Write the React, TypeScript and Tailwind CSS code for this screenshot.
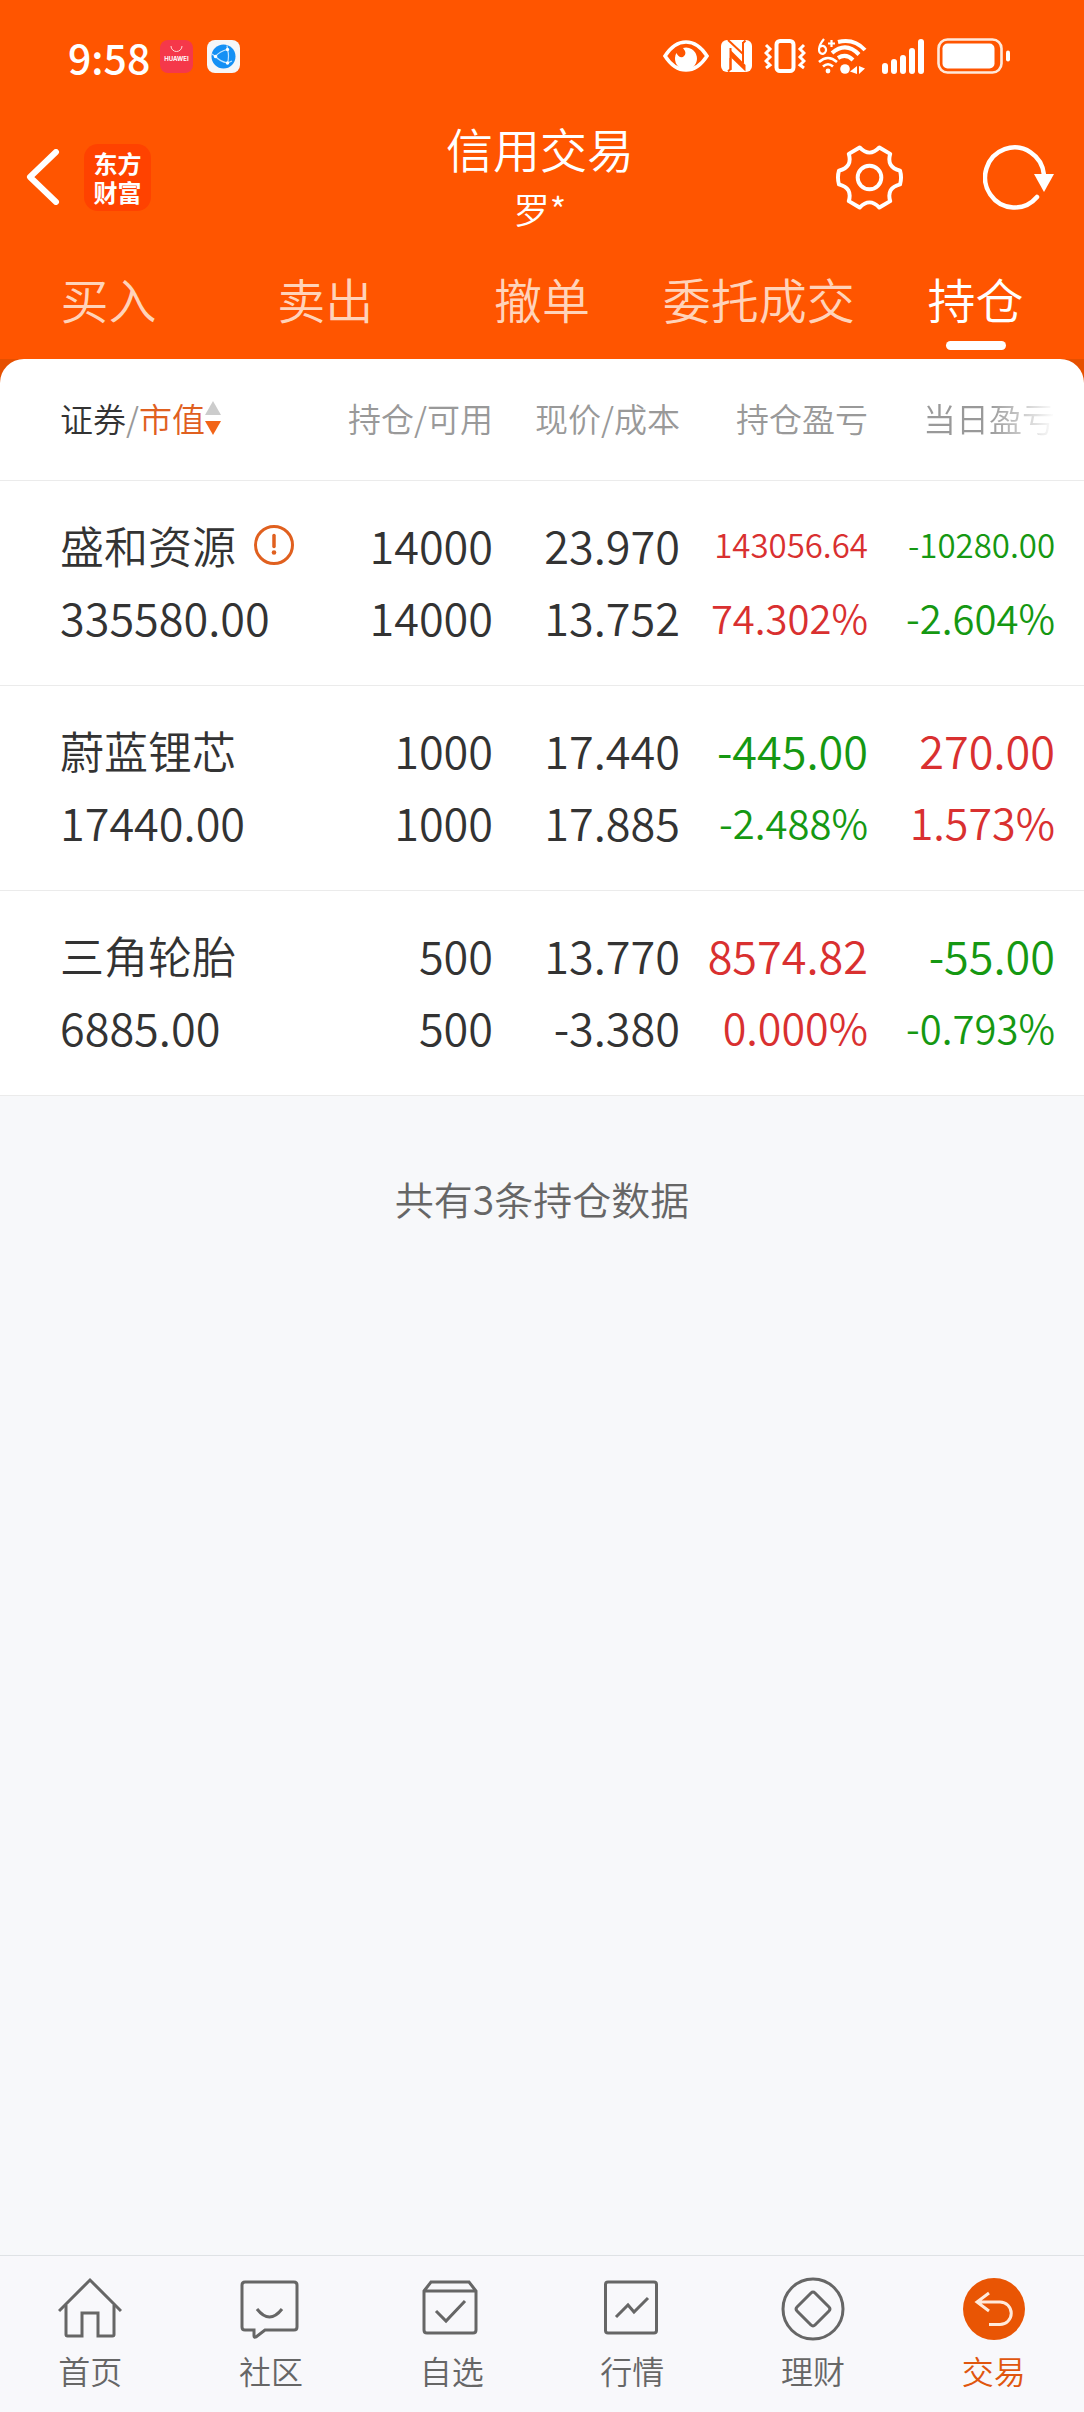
import { useState } from "react";
import type { ReactNode } from "react";

type Holding = {
  name: string;
  warning?: boolean;
  value: string;
  amount: string;
  available: string;
  price: string;
  cost: string;
  profit: string;
  profitRate: string;
  dayProfit: string;
  dayRate: string;
};

const tabs = ["买入", "卖出", "撤单", "委托成交", "持仓"];

const holdings: Holding[] = [
  {
    name: "盛和资源",
    warning: true,
    value: "335580.00",
    amount: "14000",
    available: "14000",
    price: "23.970",
    cost: "13.752",
    profit: "143056.64",
    profitRate: "74.302%",
    dayProfit: "-10280.00",
    dayRate: "-2.604%",
  },
  {
    name: "蔚蓝锂芯",
    value: "17440.00",
    amount: "1000",
    available: "1000",
    price: "17.440",
    cost: "17.885",
    profit: "-445.00",
    profitRate: "-2.488%",
    dayProfit: "270.00",
    dayRate: "1.573%",
  },
  {
    name: "三角轮胎",
    value: "6885.00",
    amount: "500",
    available: "500",
    price: "13.770",
    cost: "-3.380",
    profit: "8574.82",
    profitRate: "0.000%",
    dayProfit: "-55.00",
    dayRate: "-0.793%",
  },
];

// long values shrink so that they stay inside their column
function sizeFor(text: string) {
  if (text.length > 8) return "text-[33px]";
  if (text.endsWith("%") && text.length > 6) return "text-[40px]";
  if (text.endsWith("%")) return "text-[43px]";
  return "text-[45px]";
}

function StatusBar() {
  return (
    <div className="flex h-28 items-center justify-between pr-[74px] pl-[68px]">
      <div className="flex items-center">
        <span className="text-[41px] leading-[48px] font-medium">9:58</span>
        <svg className="ml-2.5 size-[33px]" viewBox="0 0 33 33" aria-hidden>
          <rect width="33" height="33" rx="8" fill="#f5384a" />
          <path d="M11 6a5.5 5.5 0 0 0 11 0" fill="none" stroke="#ffd9d6" strokeWidth="1" />
          <text x="16.5" y="21" textAnchor="middle" fontSize="6" fontWeight="700" fill="#fff" fontFamily="Inter, sans-serif">
            HUAWEI
          </text>
        </svg>
        <svg className="ml-3.5 size-[33px]" viewBox="0 0 33 33" aria-hidden>
          <rect width="33" height="33" rx="8" fill="#f6f6f8" />
          <circle cx="16.5" cy="16.5" r="12" fill="#1590f5" />
          <g fill="none" stroke="#bfe4ff" strokeWidth="1.2">
            <path d="M8.5 16.5Q13 11 20.5 9.5Q22.5 16 20.5 23Q13 21.5 8.5 16.5Z" />
            <path d="M8.5 16.5L5 14M20.5 9.5L20 5.5M20.5 23L25 21" />
          </g>
          <g fill="#fff">
            <circle cx="8.5" cy="16.5" r="1.7" />
            <circle cx="20.5" cy="9.5" r="1.7" />
            <circle cx="20.5" cy="23" r="1.7" />
          </g>
        </svg>
      </div>

      <div className="flex items-center gap-3">
        <svg className="h-9 w-[46px]" viewBox="0 0 46 36" aria-hidden>
          <path d="M2 18Q11 4 23 4T44 18Q35 32 23 32T2 18Z" fill="none" stroke="#fff" strokeWidth="3.5" />
          <path d="M20 10a11 11 0 1 1-8 10q0-3 1.5-5q2 5 6.5 4q5-3 0-9Z" fill="#fff" />
        </svg>
        <svg className="h-9 w-[31px]" viewBox="0 0 31 36" aria-hidden>
          <rect y="2" width="31" height="32" rx="6" fill="#fff" />
          <path d="M7 2L22 16V5L24.5 2.5M9.5 20V31L7 33.5" fill="none" stroke="#ff5500" strokeWidth="2" />
          <path d="M9.5 10V32M22 4V25" fill="none" stroke="#ff5500" strokeWidth="2" />
          <path d="M9.5 12L24.5 27V33.5L9.5 19Z" fill="#ff5500" />
        </svg>
        <svg className="h-9 w-[42px]" viewBox="0 0 42 36" fill="none" stroke="#fff" aria-hidden>
          <rect x="12.5" y="3" width="17" height="30" rx="3.5" strokeWidth="4" />
          <path d="M2 7l4 4-4 4 4 4-4 4 4 4-4 3M40 7l-4 4 4 4-4 4 4 4-4 4 4 3" strokeWidth="3" />
        </svg>
        <svg className="h-9 w-[50px]" viewBox="0 0 50 36" fill="none" stroke="#fff" aria-hidden>
          <g strokeWidth="2.2">
            <path d="M6 1Q1 7 1 12a3.5 4 0 1 0 1-3M10 5.5h7M13.5 2v7" />
          </g>
          <g strokeWidth="4">
            <path d="M20 4Q36 0 47 12" />
            <path d="M14 15Q28 3 41 16.5" />
            <path d="M20 20Q28 15 35 22" />
          </g>
          <g strokeWidth="2.6">
            <path d="M1 24Q10 16 19 24" />
            <path d="M5 28.5Q10 24 15 28.5" />
          </g>
          <g fill="#fff" stroke="none">
            <circle cx="10" cy="33" r="2.4" />
            <circle cx="27" cy="31" r="4.8" />
            <path d="M39 28v8l-7-2.5ZM41 28v8l6-5.5Z" />
          </g>
        </svg>
        <svg className="h-9 w-[45px]" viewBox="0 0 45 36" fill="#fff" aria-hidden>
          <rect x="2" y="25" width="6" height="11" rx="3" />
          <rect x="11" y="21" width="6" height="15" rx="3" />
          <rect x="20" y="17" width="6" height="19" rx="3" />
          <rect x="29" y="10" width="6" height="26" rx="3" />
          <rect x="38" y="1" width="6" height="35" rx="3" />
        </svg>
        <svg className="h-9 w-[73px]" viewBox="0 0 73 36" aria-hidden>
          <rect x="1.5" y="1.5" width="63" height="33" rx="9" fill="none" stroke="#ffe9dc" strokeWidth="2.6" />
          <rect x="5.5" y="5.5" width="52" height="25" rx="5" fill="#fff" />
          <rect x="69" y="12.5" width="4" height="11" rx="2" fill="#fff" />
        </svg>
      </div>
    </div>
  );
}

function TopBar() {
  return (
    <div className="grid h-[130px] grid-cols-[1fr_auto_1fr] items-center pr-[30px] pl-[26px]">
      <div className="flex items-center gap-6">
        <button type="button" aria-label="返回">
          <svg className="h-14 w-[34px]" viewBox="0 0 34 56" fill="none" stroke="#fff" strokeWidth="6" strokeLinecap="round" strokeLinejoin="round" aria-hidden>
            <path d="M30 3L4 28l26 25" />
          </svg>
        </button>
        <div className="flex size-[67px] items-center justify-center rounded-[14px] bg-[#ff4200]">
          <p className="w-12 text-[24px] leading-[29px] font-bold break-all">东方财富</p>
        </div>
      </div>
      <div className="text-center">
        <h1 className="text-[47px] leading-[62px]">信用交易</h1>
        <p className="text-[36px] leading-[58px]">罗*</p>
      </div>
      <div className="flex items-center justify-end gap-20">
        <button type="button" aria-label="设置">
          <svg className="size-[67px]" viewBox="0 0 68 68" fill="none" stroke="#fff" strokeWidth="4" strokeLinejoin="round" aria-hidden>
            <path d="M24 3.5Q34 14 44 3.5L55 10Q51 23.5 65 27Q67 34 65 41Q51 44.5 55 58L44 64.5Q34 54 24 64.5L13 58Q17 44.5 3 41Q1 34 3 27Q17 23.5 13 10Z" />
            <circle cx="34" cy="34" r="12" />
          </svg>
        </button>
        <button type="button" aria-label="刷新">
          <svg className="h-[68px] w-[71px]" viewBox="0 0 71 68" fill="none" stroke="#fff" strokeWidth="4.5" aria-hidden>
            <path d="M61 32A29.5 30 0 1 0 54 54" strokeLinecap="round" />
            <path d="M51 31h20l-10 18Z" fill="#fff" stroke="none" />
          </svg>
        </button>
      </div>
    </div>
  );
}

function TwoLines({ top, bottom }: { top: string; bottom: string }) {
  return (
    <td className="align-top">
      <div className="flex h-[72px] items-center justify-end text-[45px]">{top}</div>
      <div className="flex h-[72px] items-center justify-end text-[45px]">{bottom}</div>
    </td>
  );
}

function ProfitCell({ amount, rate, last }: { amount: string; rate: string; last?: boolean }) {
  const color = amount.startsWith("-") ? "text-[#159812]" : "text-[#d93030]";
  return (
    <td className={`align-top ${color} ${last ? "pr-[29px]" : ""}`}>
      <div className={`flex h-[72px] items-center justify-end ${sizeFor(amount)}`}>{amount}</div>
      <div className={`flex h-[72px] items-center justify-end ${sizeFor(rate)}`}>{rate}</div>
    </td>
  );
}

function HoldingsTable() {
  return (
    <table className="w-full table-fixed border-collapse leading-none text-[#333]">
      <colgroup>
        <col />
        <col className="w-[175px]" />
        <col className="w-[187px]" />
        <col className="w-[188px]" />
        <col className="w-[216px]" />
      </colgroup>
      <thead>
        <tr className="h-[121px] border-b border-[#ebebeb] text-[33px] text-[#999] [&>th]:pb-[2px] [&>th]:text-right [&>th]:font-[350]">
          <th className="pl-[60px]">
            <button type="button" className="flex items-center">
              <span className="text-[#333]">证券</span>/<span className="text-[#e0601f]">市值</span>
              <svg className="h-[34px] w-4" viewBox="0 0 16 34" aria-hidden>
                <path d="M8 0l8 14H0Z" fill="#ccc" />
                <path d="M8 34l8-14H0Z" fill="#f26417" />
              </svg>
            </button>
          </th>
          <th>持仓/可用</th>
          <th>现价/成本</th>
          <th>持仓盈亏</th>
          <th className="pr-[29px]">
            <span className="bg-linear-to-r from-[#999] from-50% to-white bg-clip-text text-transparent">当日盈亏</span>
          </th>
        </tr>
      </thead>
      <tbody>
        {holdings.map((h) => (
          <tr key={h.name} className="h-[205px] border-b border-[#ebebeb] [&>td]:pt-7">
            <td className="pl-[60px] align-top">
              <div className="flex h-[72px] items-center gap-[18px] text-[44px]">
                {h.name}
                {h.warning && (
                  <svg className="size-10" viewBox="0 0 40 40" fill="none" stroke="#e0601f" strokeLinecap="round" role="img" aria-label="风险提示">
                    <circle cx="20" cy="20" r="18.5" strokeWidth="3" />
                    <path d="M20 10.5v11" strokeWidth="3.5" />
                    <circle cx="20" cy="27.5" r="2.3" fill="#e0601f" stroke="none" />
                  </svg>
                )}
              </div>
              <div className="flex h-[72px] items-center text-[45px]">{h.value}</div>
            </td>
            <TwoLines top={h.amount} bottom={h.available} />
            <TwoLines top={h.price} bottom={h.cost} />
            <ProfitCell amount={h.profit} rate={h.profitRate} />
            <ProfitCell amount={h.dayProfit} rate={h.dayRate} last />
          </tr>
        ))}
      </tbody>
    </table>
  );
}

const navItems: { label: string; icon: ReactNode }[] = [
  {
    label: "首页",
    icon: (
      <>
        <path d="M1 34L32 3l31 31" />
        <path d="M8 28v29.5q0 1.5 1.5 1.5H24V36h16v23h14.5q1.5 0 1.5-1.5V28" />
      </>
    ),
  },
  {
    label: "社区",
    icon: (
      <>
        <path d="M6 5h49q3 0 3 3v42q0 3-3 3H26l-9 7q-2 1-2-1v-6H6q-3 0-3-3V8q0-3 3-3Z" />
        <path d="M18 32q12.5 16 25 0" />
      </>
    ),
  },
  {
    label: "自选",
    icon: (
      <>
        <path d="M4 14l7-9h38l7 9v39q0 3-3 3H7q-3 0-3-3ZM4 14h52" />
        <path d="M16 34l10 10 19-20" />
      </>
    ),
  },
  {
    label: "行情",
    icon: (
      <>
        <rect x="5.5" y="5" width="51" height="51" rx="2.5" />
        <path d="M16 40l12-12 6 7 14-14" />
      </>
    ),
  },
  {
    label: "理财",
    icon: (
      <>
        <circle cx="32" cy="32" r="30" />
        <path d="M30 16q2-2 4 0l14 14q2 2 0 4L34 48q-2 2-4 0L16 34q-2-2 0-4Z" />
      </>
    ),
  },
  {
    label: "交易",
    icon: (
      <>
        <circle cx="32" cy="32" r="31" fill="#e95504" stroke="none" />
        <path d="M27 16L15 25l12 9M15 25h23a11 11 0 0 1 0 22.5H27" stroke="#ffeadb" />
      </>
    ),
  },
];

function BottomNav() {
  return (
    <nav className="sticky bottom-0 flex h-[157px] border-t border-[#dfe2e5] bg-[#f8f8fb] pt-[21px]">
      {navItems.map((item) => {
        const active = item.label === "交易";
        return (
          <a
            key={item.label}
            href="#"
            aria-current={active ? "page" : undefined}
            className={`flex flex-1 flex-col items-center gap-[7px] ${active ? "text-[#e0560e]" : "text-[#666]"}`}
          >
            <svg className="size-16" viewBox="0 0 64 64" fill="none" stroke="currentColor" strokeWidth="3" aria-hidden>
              {item.icon}
            </svg>
            <span className="text-[32px] leading-[44px]">{item.label}</span>
          </a>
        );
      })}
    </nav>
  );
}

export default function App() {
  const [tab, setTab] = useState("持仓");

  return (
    <div className="flex min-h-screen flex-col bg-[#f7f8fa] font-['Noto_Sans_CJK_SC',sans-serif] font-[350]">
      <header className="bg-[#ff5500] text-white">
        <StatusBar />
        <TopBar />
        <div className="flex h-[117px]" role="tablist">
          {tabs.map((t) => (
            <button
              key={t}
              type="button"
              role="tab"
              aria-selected={t === tab}
              onClick={() => setTab(t)}
              className={`flex flex-1 flex-col items-center justify-between pt-[22px] pb-[9px] text-[48px] leading-[68px] ${
                t === tab ? "text-white" : "text-[#ffd3ba]"
              }`}
            >
              {t}
              {t === tab && <span className="h-[9px] w-[60px] rounded-full bg-white" />}
            </button>
          ))}
        </div>
      </header>

      <main className="flex-1">
        <div className="bg-[linear-gradient(#e65000_24px,#fff_24px)]">
          <div className="overflow-hidden rounded-t-[24px] bg-white">
            <HoldingsTable />
          </div>
        </div>
        <p className="pt-[74px] text-center text-[39px] leading-[56px] text-[#666]">共有3条持仓数据</p>
      </main>

      <BottomNav />
    </div>
  );
}
